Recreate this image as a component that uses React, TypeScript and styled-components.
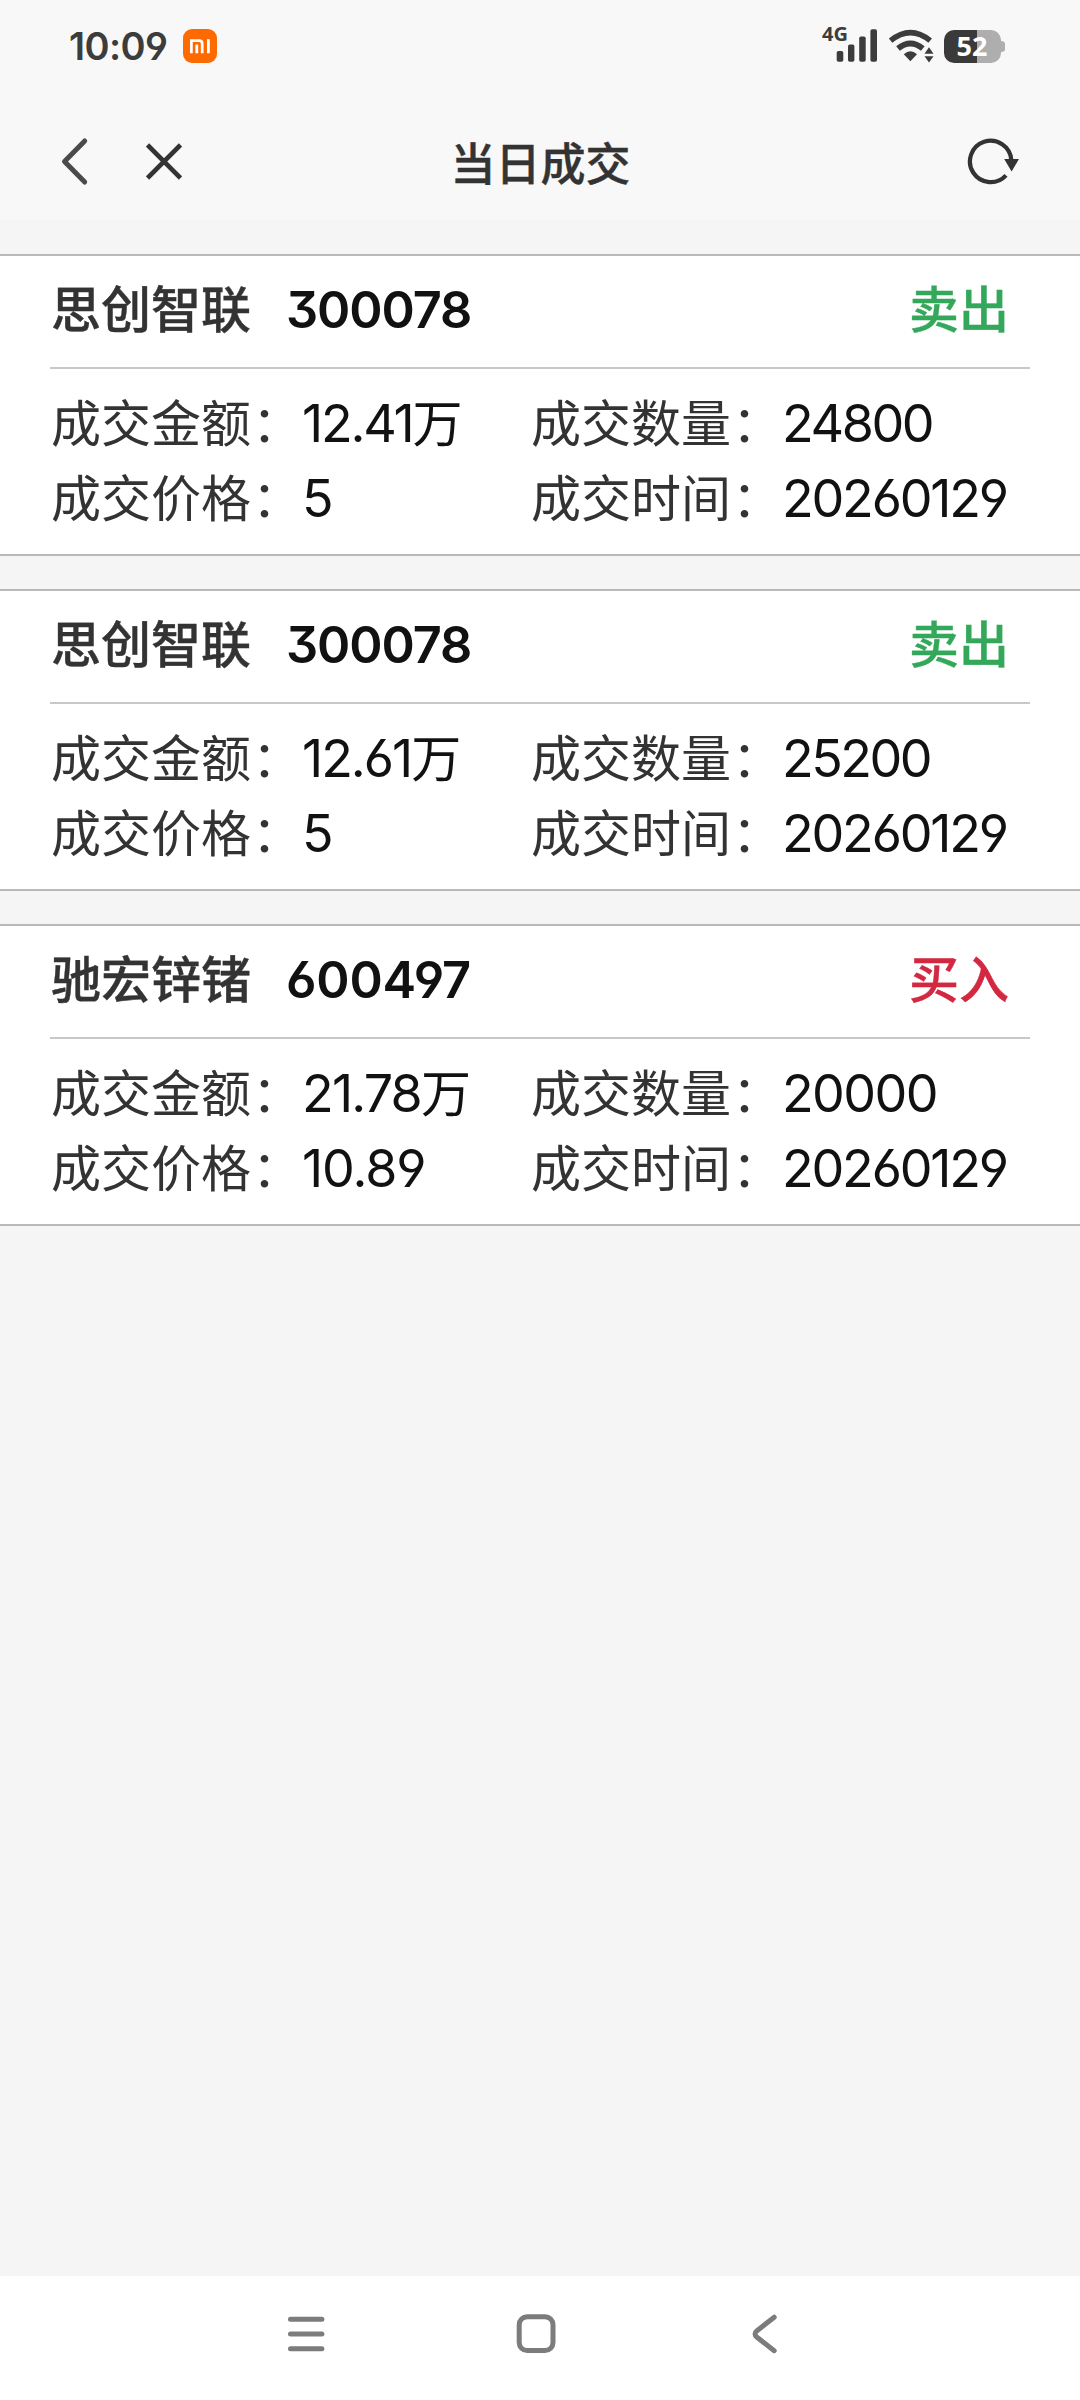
import React from "react";
import styled, { createGlobalStyle } from "styled-components";

const Global = createGlobalStyle`
  * { box-sizing: border-box; }
  body { margin: 0; background: #f5f5f5; }
`;

const latin = `Inter, "Noto Sans CJK SC", sans-serif`;
const cjk = `"Noto Sans CJK SC", sans-serif`;
const compact = `"Noto Sans", sans-serif`;

const Screen = styled.div`
  display: flex;
  flex-direction: column;
  width: 1080px;
  height: 2400px;
  background: #f5f5f5;
  font-family: ${cjk};
  color: #333;
  overflow: hidden;
`;

const StatusBar = styled.div`
  display: flex;
  align-items: center;
  height: 92px;
  padding: 0 74px 0 69px;
  background: #f8f8f8;
`;

const Clock = styled.span`
  width: 114px;
  font: 600 38px/92px ${latin};
  font-feature-settings: "cv04", "ss01";
  letter-spacing: -0.6px;
  color: #3c3c3c;
  white-space: nowrap;
`;

const StatusIcons = styled.div`
  display: flex;
  align-items: center;
  margin-left: auto;
`;

const SignalBox = styled.div`
  position: relative;
  width: 60px;
  height: 40px;
`;

const NetworkLabel = styled.span`
  position: absolute;
  left: 0;
  top: -2px;
  font: 700 20px/20px ${compact};
  color: #3c3c3c;
`;

const Battery = styled.div`
  position: relative;
  display: flex;
  width: 62px;
  height: 33px;
  margin-left: 9px;
`;

const BatteryText = styled.span`
  position: absolute;
  left: 0;
  top: 0;
  width: 56px;
  text-align: center;
  font: 700 27px/31px ${compact};
  color: #fff;
`;

const Header = styled.header`
  display: grid;
  grid-template-columns: 1fr auto 1fr;
  align-items: center;
  height: 128px;
  padding: 0 59px 0 60px;
  background: #f8f8f8;
`;

const HeaderActions = styled.div<{ $end?: boolean }>`
  display: flex;
  align-items: center;
  justify-content: ${(p) => (p.$end ? "flex-end" : "flex-start")};
  gap: 56px;
  height: 60px;
  margin-top: 10px;
`;

const Title = styled.h1`
  margin: 11px 0 0;
  font: 500 45px/60px ${cjk};
  -webkit-text-stroke: 0.4px #333;
  color: #333;
`;

const List = styled.main`
  display: flex;
  flex: 1;
  flex-direction: column;
  gap: 33px;
  padding-top: 34px;
`;

const Card = styled.section`
  height: 302px;
  padding: 0 50px;
  border-top: 2px solid #b9b9b9;
  border-bottom: 2px solid #b9b9b9;
  background: #fff;
`;

const CardHead = styled.div`
  display: flex;
  align-items: baseline;
  height: 113px;
  padding: 0 21px 0 1px;
  border-bottom: 2px solid #c8c8c8;
  line-height: 101px;
`;

const StockName = styled.span`
  width: 235px;
  font-size: 50px;
  font-weight: 500;
  -webkit-text-stroke: 0.4px #333;
`;

const StockCode = styled.span<{ $tracking: number }>`
  font: 600 50.5px/60px ${latin};
  font-feature-settings: "cv03", "cv04", "cv09";
  letter-spacing: ${(p) => p.$tracking}px;
  color: #111;
`;

const Side = styled.span<{ $buy: boolean }>`
  margin-left: auto;
  font-size: 50px;
  font-weight: 500;
  -webkit-text-stroke: 0.4px currentColor;
  color: ${(p) => (p.$buy ? "#d32841" : "#33a85a")};
`;

const Details = styled.dl`
  display: grid;
  grid-template-columns: 480px 1fr;
  grid-auto-rows: 75px;
  margin: 0;
  padding: 14px 0 0 1px;
`;

const Field = styled.div`
  display: flex;
  align-items: baseline;
  white-space: nowrap;
`;

const Label = styled.dt`
  width: 251px;
  font-size: 50px;
  line-height: 75px;
`;

const Colon = styled.span`
  margin-left: 1px;
`;

const Value = styled.dd<{ $tracking: number }>`
  margin: 0;
  font: 400 52px/60px ${latin};
  font-feature-settings: "cv03", "cv04";
  letter-spacing: ${(p) => p.$tracking}px;
  color: #111;
`;

const Unit = styled.span`
  font: 400 50px/60px ${cjk};
`;

const NavBar = styled.nav`
  display: flex;
  align-items: center;
  gap: 186px;
  height: 124px;
  padding: 0 0 8px 284px;
  background: #fff;
`;

type Cell = { label: string; value: string; unit?: string; tracking?: number };
type Trade = { name: string; code: string; codeTracking: number; buy: boolean; cells: Cell[] };

const trades: Trade[] = [
  {
    name: "思创智联", code: "300078", codeTracking: -1.1, buy: false,
    cells: [
      { label: "成交金额", value: "12.41", unit: "万", tracking: -2.2 },
      { label: "成交数量", value: "24800", tracking: -2.4 },
      { label: "成交价格", value: "5" },
      { label: "成交时间", value: "20260129", tracking: -2.2 },
    ],
  },
  {
    name: "思创智联", code: "300078", codeTracking: -1.1, buy: false,
    cells: [
      { label: "成交金额", value: "12.61", unit: "万", tracking: -2 },
      { label: "成交数量", value: "25200", tracking: -2.5 },
      { label: "成交价格", value: "5" },
      { label: "成交时间", value: "20260129", tracking: -2.2 },
    ],
  },
  {
    name: "驰宏锌锗", code: "600497", codeTracking: -0.2, buy: true,
    cells: [
      { label: "成交金额", value: "21.78", unit: "万", tracking: -1.8 },
      { label: "成交数量", value: "20000", tracking: -1.6 },
      { label: "成交价格", value: "10.89", tracking: -1.1 },
      { label: "成交时间", value: "20260129", tracking: -2.2 },
    ],
  },
];

const MiBadge = () => (
  <svg width="34" height="34" viewBox="0 0 34 34">
    <rect width="34" height="34" rx="9" fill="#ff6a00" />
    <path d="M8.400 24.300V11.600h7.800q3 0 3 3v9.700" fill="none" stroke="#fff" strokeWidth="2.700" />
    <path d="M13.800 15.500v8.800M25.400 10.300v14" fill="none" stroke="#fff" strokeWidth="2.800" />
  </svg>
);

const SignalBars = () => (
  <svg width="60" height="40" viewBox="822 26 60 40" fill="#3c3c3c">
    <rect x="836.7" y="51" width="6.6" height="10.8" rx="1.8" />
    <rect x="848" y="44.6" width="6.4" height="17.2" rx="1.8" />
    <rect x="859.2" y="36.4" width="6.5" height="25.4" rx="1.8" />
    <rect x="870.4" y="29.2" width="6.6" height="32.6" rx="1.8" />
  </svg>
);

const Wifi = () => (
  <svg width="53" height="40" viewBox="882 26 53 40">
    <path d="M890.600 40.700Q910.400 24.600 930.200 40.700" fill="none" stroke="#3c3c3c" strokeWidth="5.600" />
    <path d="M898 48.500Q910.400 38.400 922.800 48.500" fill="none" stroke="#3c3c3c" strokeWidth="5.800" />
    <path d="M903.800 54.200Q910.400 48.400 917 54.200L910.400 61.200z" fill="#3c3c3c" />
    <path d="M929 47.200l4.500 6.600h-9zM929 62.400l4.500-6.200h-9z" fill="#3c3c3c" />
  </svg>
);

const BatteryShape = () => (
  <svg width="62" height="33" viewBox="0 0 62 33">
    <path d="M33 0h14a10 10 0 0 1 10 10v1q4 .5 4 2.500v6q0 2-4 2.500v1a10 10 0 0 1-10 10H33z" fill="#aeaeae" />
    <path d="M33 0H10A10 10 0 0 0 0 10v13a10 10 0 0 0 10 10h23z" fill="#3a3a3a" />
  </svg>
);

const BackIcon = () => (
  <svg width="30" height="50" viewBox="60 136 30 50">
    <path d="M84.700 141L64.500 161.400L84.700 182" fill="none" stroke="#4a4a4a" strokeWidth="5" strokeLinecap="round" strokeLinejoin="round" />
  </svg>
);

const CloseIcon = () => (
  <svg width="36" height="50" viewBox="146 136 36 50">
    <path d="M147.500 145L180.500 178M180.500 145L147.500 178" stroke="#333" strokeWidth="4.600" />
  </svg>
);

const RefreshIcon = () => (
  <svg width="54" height="50" viewBox="967 136 54 50">
    <path d="M1011.300 160A20.700 20.700 0 1 0 1006 175.300" fill="none" stroke="#333" strokeWidth="4.200" />
    <path d="M1004.200 159h14.800l-7.400 12.400z" fill="#333" />
  </svg>
);

const navStroke = { fill: "none", stroke: "#7c7c7c", strokeWidth: 5, strokeLinecap: "round", strokeLinejoin: "round" } as const;

export default function App() {
  return (
    <>
      <Global />
      <Screen>
        <StatusBar>
          <Clock>10:09</Clock>
          <MiBadge />
          <StatusIcons>
            <SignalBox>
              <SignalBars />
              <NetworkLabel>4G</NetworkLabel>
            </SignalBox>
            <Wifi />
            <Battery>
              <BatteryShape />
              <BatteryText>52</BatteryText>
            </Battery>
          </StatusIcons>
        </StatusBar>
        <Header>
          <HeaderActions>
            <BackIcon />
            <CloseIcon />
          </HeaderActions>
          <Title>当日成交</Title>
          <HeaderActions $end>
            <RefreshIcon />
          </HeaderActions>
        </Header>
        <List>
          {trades.map((t, i) => (
            <Card key={i}>
              <CardHead>
                <StockName>{t.name}</StockName>
                <StockCode $tracking={t.codeTracking}>{t.code}</StockCode>
                <Side $buy={t.buy}>{t.buy ? "买入" : "卖出"}</Side>
              </CardHead>
              <Details>
                {t.cells.map((c) => (
                  <Field key={c.label}>
                    <Label>
                      {c.label}
                      <Colon>：</Colon>
                    </Label>
                    <Value $tracking={c.tracking ?? 0}>
                      {c.value}
                      {c.unit && <Unit>{c.unit}</Unit>}
                    </Value>
                  </Field>
                ))}
              </Details>
            </Card>
          ))}
        </List>
        <NavBar>
          <svg width="44" height="50" viewBox="284 2309 44 50">
            <path d="M290.500 2319.300h31.400M290.500 2334h31.400M290.500 2348.700h31.400" {...navStroke} />
          </svg>
          <svg width="50" height="50" viewBox="514 2309 50 50">
            <rect x="519.200" y="2316.700" width="33.800" height="33.800" rx="8" {...navStroke} />
          </svg>
          <svg width="30" height="50" viewBox="750 2309 30 50">
            <path d="M774.200 2317.200L757 2330.700Q753 2334 757 2337.300L774.200 2350.700" {...navStroke} />
          </svg>
        </NavBar>
      </Screen>
    </>
  );
}
